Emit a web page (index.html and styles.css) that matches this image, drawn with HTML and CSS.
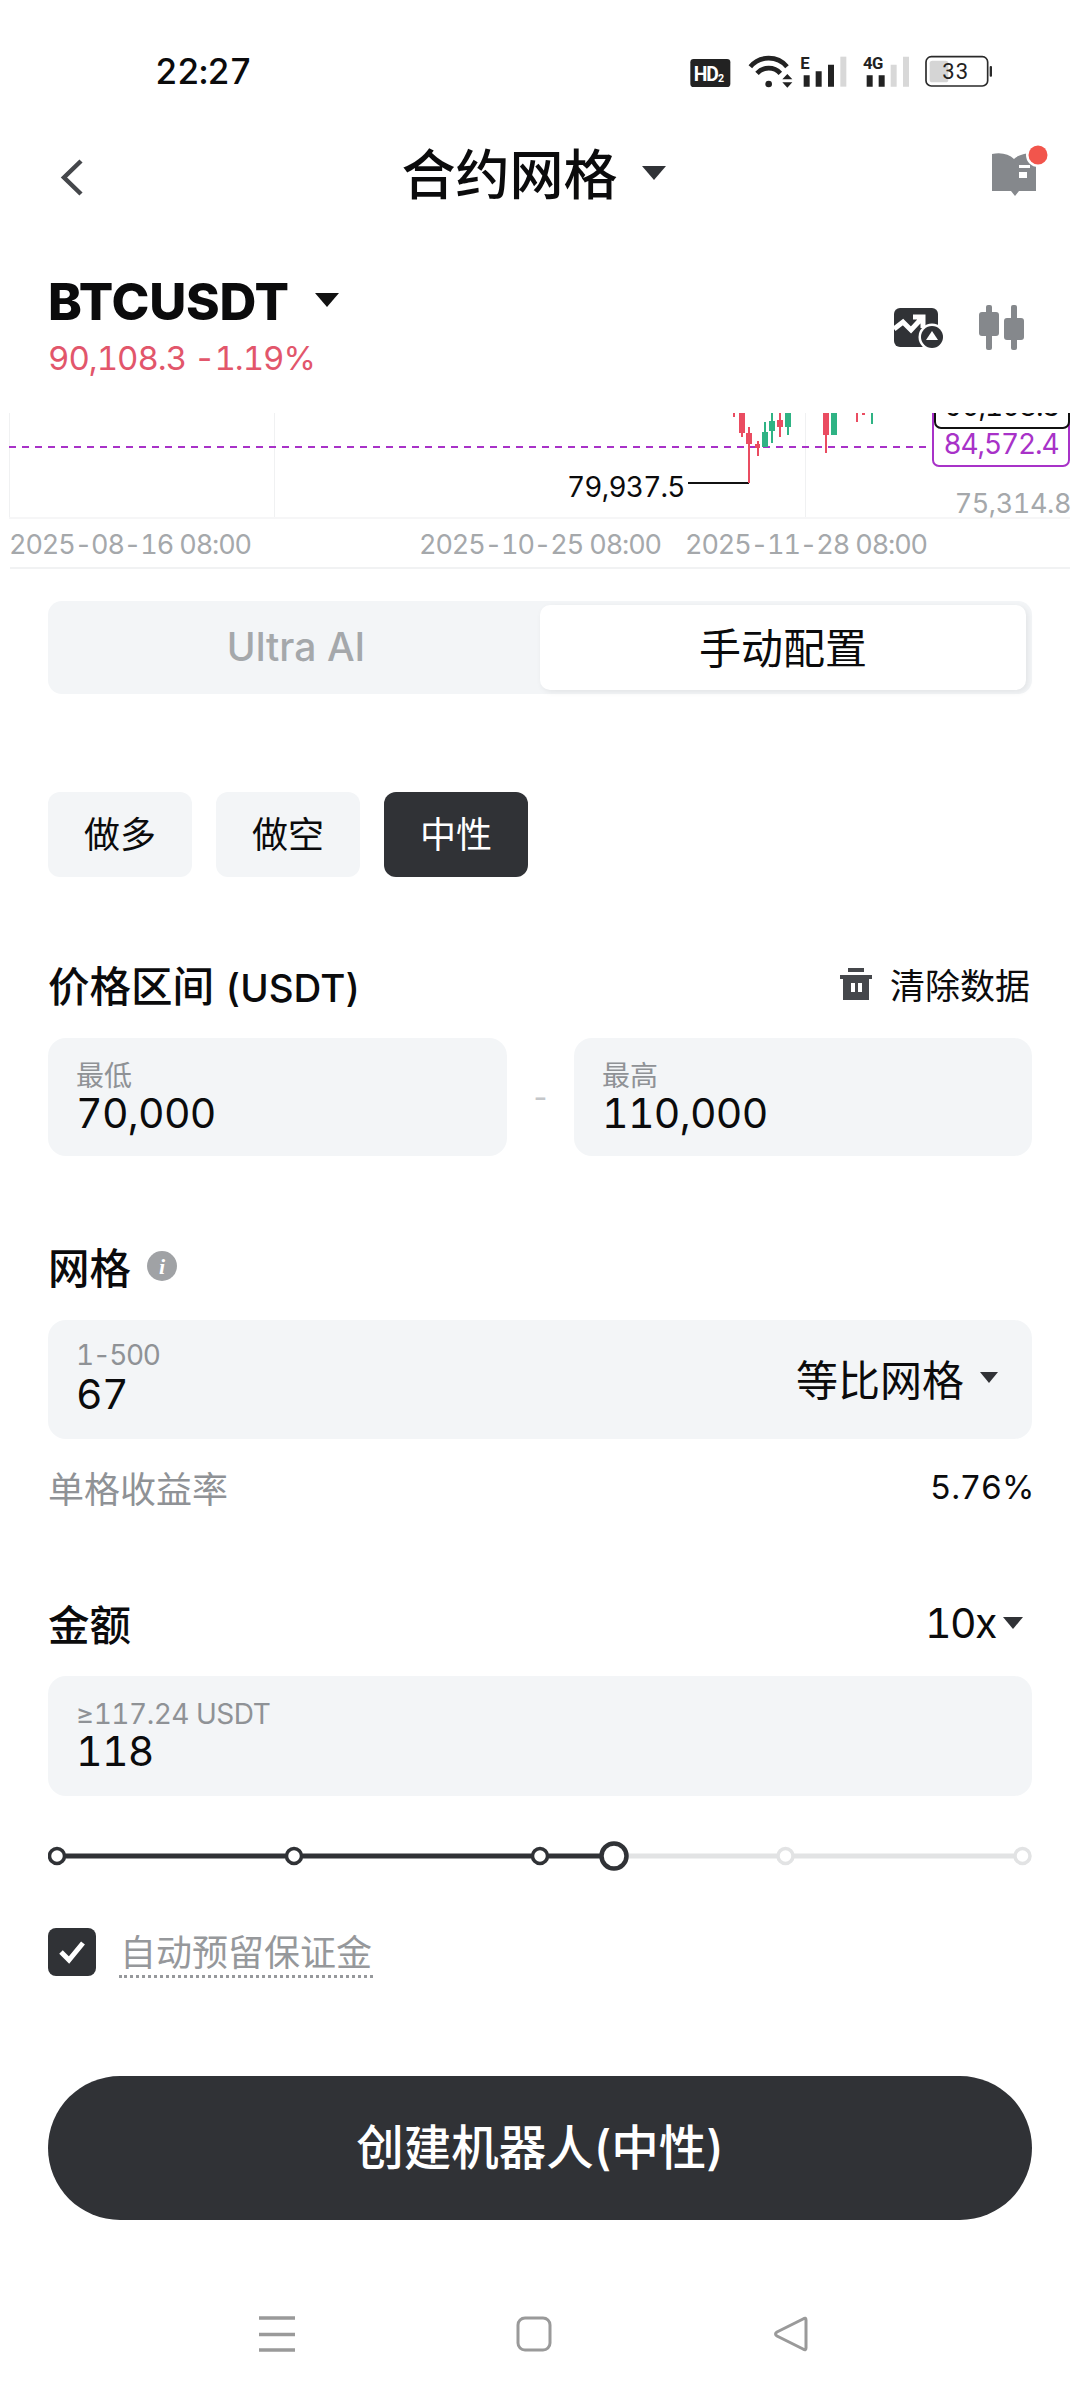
FILE: index.html
```html
<!DOCTYPE html>
<html lang="zh-CN">
<head>
<meta charset="utf-8">
<title>合约网格</title>
<link rel="stylesheet" href="styles.css">
</head>
<body>
<div class="screen">
  <header class="status">
    <span class="time">22:27</span>
    <svg class="status-icons" viewBox="80 60 930 120" width="310" height="40">
      <rect x="90" y="87" width="120" height="84" rx="10" fill="#222"/>
      <text x="100" y="152" class="si-hd">HD<tspan class="si-hd2" dy="4">2</tspan></text>
      <path d="M270 110A72 72 0 0 1 380 110M290 130A47 47 0 0 1 360 130" fill="none" stroke="#222" stroke-width="14"/>
      <circle cx="325" cy="162" r="10" fill="#222"/>
      <path d="M381 132l15 16h-30zM381 173l15-16h-30z" fill="#222"/>
      <text x="420" y="118" class="si-net">E</text>
      <path d="M430 136h18v34h-18zM466 124h18v46h-18zM503 104h18v66h-18z" fill="#222"/>
      <path d="M540 80h18v90h-18z" fill="#d8d8d8"/>
      <text x="608" y="118" class="si-net">4G</text>
      <path d="M619 136h18v34h-18zM655 136h18v34h-18z" fill="#222"/>
      <path d="M691 104h18v66h-18zM728 80h18v90h-18z" fill="#d8d8d8"/>
      <rect x="797" y="80" width="185" height="88" rx="16" fill="none" stroke="#2a2a2a" stroke-width="5"/>
      <rect x="808" y="92" width="56" height="65" rx="8" fill="#d5d5d5"/>
      <text x="846" y="148" class="si-batt">33</text>
      <rect x="988" y="108" width="7" height="32" rx="3" fill="#2a2a2a"/>
    </svg>
  </header>

  <nav class="nav">
    <svg class="back" viewBox="0 0 24 37" width="24" height="37"><path d="M21 2L4 18.500 21 35" fill="none" stroke="#45474b" stroke-width="4.500"/></svg>
    <div class="nav-title"><span class="nav-text">合约网格</span><i class="caret caret-title"></i></div>
    <svg class="book" viewBox="0 0 60 50" width="60" height="50">
      <path d="M3 5C12 3 20 5 25 10C29 6 36 4 47 4V42H30L26 47L22 42H3Z" fill="#85888c"/>
      <path d="M30 16H41V19H30zM30 23H38V29H30z" fill="#fff"/>
      <circle cx="49" cy="6" r="12" fill="#fff"/>
      <circle cx="49" cy="6" r="9.500" fill="#f2554c"/>
    </svg>
  </nav>

  <section class="symbol">
    <div>
      <div class="symbol-name"><span>BTCUSDT</span><i class="caret caret-symbol"></i></div>
      <div class="symbol-price">90,108.3 -1.19%</div>
    </div>
    <div class="symbol-tools">
      <svg class="tool-trend" viewBox="0 0 50 42" width="50" height="42">
        <rect x="1" y="1" width="44" height="39" rx="6" fill="#303236"/>
        <path d="M1 22L10 15L18 23L30 10M20 10H30V21" fill="none" stroke="#fff" stroke-width="5"/>
        <circle cx="39" cy="30" r="13.500" fill="#fff"/>
        <circle cx="39" cy="30" r="11" fill="#303236"/>
        <path d="M39 24L45 33H33Z" fill="#fff"/>
      </svg>
      <svg viewBox="0 0 46 46" width="46" height="46">
        <g class="tool-candle">
          <rect x="0" y="7" width="20" height="24" rx="3"/>
          <rect x="7" y="0" width="6" height="45" rx="2"/>
          <rect x="25" y="13" width="20" height="22" rx="3"/>
          <rect x="32" y="0" width="6" height="45" rx="2"/>
        </g>
      </svg>
    </div>
  </section>

  <section class="chart">
    <svg class="chart-plot" viewBox="0 413 1080 157" width="1080" height="157">
      <path d="M9.500 413V518M274.500 413V518M805.500 413V518" stroke="#f0f1f2" stroke-width="1"/>
      <path d="M9 518H1070" stroke="#f6f6f7" stroke-width="2"/>
      <path d="M10 568H1070" stroke="#f1f2f3" stroke-width="2"/>
      <path d="M9 447H932" stroke="#a832c8" stroke-width="2" stroke-dasharray="7 6"/>
      <path d="M688 483H749" stroke="#111" stroke-width="2"/>
      <g class="candle-red">
        <path d="M733 413h2v4h-2zM739 413h6v20h-6zM741 433h2v4h-2zM746 433h6v11h-6zM748 427h2v56h-2zM755 444h5v4h-5zM757 441h2v15h-2zM777 420h6v7h-6zM779 413h2v24h-2zM823 413h6v22h-6zM825 435h2v18h-2zM856 413h2v9h-2zM862 413h3v2h-3z"/>
      </g>
      <g class="candle-green">
        <path d="M762 432h6v15h-6zM764 422h2v10h-2zM769 421h6v10h-6zM771 413h2v30h-2zM785 413h6v14h-6zM787 427h2v8h-2zM831 413h6v22h-6zM871 413h2v11h-2z"/>
      </g>
    </svg>
    <div class="tag tag-last">90,108.3</div>
    <div class="tag tag-mark">84,572.4</div>
    <span class="chart-label label-low">79,937.5</span>
    <span class="chart-label label-axis">75,314.8</span>
    <span class="chart-label date date-a">2025-08-16 08:00</span>
    <span class="chart-label date date-b">2025-10-25 08:00</span>
    <span class="chart-label date date-c">2025-11-28 08:00</span>
  </section>

  <main class="form">
    <div class="tabs">
      <div class="tab">Ultra AI</div>
      <div class="tab tab-on">手动配置</div>
    </div>

    <div class="modes">
      <div class="mode">做多</div>
      <div class="mode">做空</div>
      <div class="mode mode-on">中性</div>
    </div>

    <div class="head head-price">
      <span class="head-title">价格区间 <span class="head-unit">(USDT)</span></span>
      <span class="clear">
        <svg viewBox="0 0 32 32" width="32" height="32"><path d="M8 0H24V4H8zM0 7H32V11H29V32H3V11H0z" fill="#45474b"/><path d="M11 15H15V24H11zM18 15H22V24H18z" fill="#fff"/></svg>
        清除数据
      </span>
    </div>
    <div class="range">
      <div class="field field-half"><span class="field-label">最低</span><span class="field-value">70,000</span></div>
      <span class="range-dash">-</span>
      <div class="field field-half"><span class="field-label">最高</span><span class="field-value">110,000</span></div>
    </div>

    <div class="head head-grid">
      <span class="head-title head-info">网格
        <svg viewBox="0 0 30 30" width="30" height="30"><circle cx="15" cy="15" r="15" fill="#a0a2a5"/><text x="15" y="23" class="info-i">i</text></svg>
      </span>
    </div>
    <div class="field field-split">
      <div class="field-stack"><span class="field-label field-label-range">1-500</span><span class="field-value">67</span></div>
      <div class="field-select"><span>等比网格</span><i class="caret caret-select"></i></div>
    </div>
    <div class="rate"><span class="rate-label">单格收益率</span><span class="rate-value">5.76%</span></div>

    <div class="head head-amount">
      <span class="head-title">金额</span>
      <span class="lever">10x<i class="caret caret-lever"></i></span>
    </div>
    <div class="field field-amount"><span class="field-label field-label-min">≥117.24 USDT</span><span class="field-value">118</span></div>

    <svg class="slider" viewBox="48 1841 984 30" width="984" height="30">
      <path d="M57 1856H614" stroke="#303236" stroke-width="5"/>
      <path d="M614 1856H1022" stroke="#e2e3e4" stroke-width="5"/>
      <g class="node-on"><circle cx="57" cy="1856" r="7.500"/><circle cx="294" cy="1856" r="7.500"/><circle cx="540" cy="1856" r="7.500"/></g>
      <circle class="node-big" cx="614" cy="1856" r="12.500"/>
      <g class="node-off"><circle cx="785.500" cy="1856" r="7.500"/><circle cx="1022.500" cy="1856" r="7.500"/></g>
    </svg>

    <div class="auto">
      <span class="check"><svg viewBox="0 0 30 26" width="30" height="26"><path d="M4 13L12 21L26 4" fill="none" stroke="#fff" stroke-width="5"/></svg></span>
      <span class="auto-label">自动预留保证金</span>
    </div>

    <button class="submit" type="button">创建机器人(中性)</button>
  </main>

  <footer class="sysnav">
    <svg viewBox="0 0 36 36" width="36" height="36"><path d="M0 2H36M0 18.500H36M0 34H36" stroke="#9a9a9a" stroke-width="3.500"/></svg>
    <svg viewBox="0 0 36 36" width="36" height="36"><rect x="2" y="2" width="32" height="32" rx="7" fill="none" stroke="#9a9a9a" stroke-width="3"/></svg>
    <svg viewBox="0 0 36 36" width="36" height="36"><path d="M33 4Q33 1 30 3L4 16Q1 18 4 20L30 33Q33 35 33 32Z" fill="none" stroke="#9a9a9a" stroke-width="3"/></svg>
  </footer>
</div>
</body>
</html>
```

FILE: styles.css
```css
* { box-sizing: border-box; }
html, body { margin: 0; background: #fff; }
body {
  font-family: Inter, "Noto Sans CJK SC", "Noto Sans", sans-serif;
  font-variant-numeric: tabular-nums;
  color: #0b0b0c;
}
.screen { width: 1080px; height: 2400px; overflow: hidden; }

.caret {
  display: inline-block;
  width: 0;
  height: 0;
  border-left: 12px solid transparent;
  border-right: 12px solid transparent;
  border-top: 14px solid #303236;
}

/* status bar */
.status {
  height: 140px;
  display: flex;
  align-items: center;
  justify-content: space-between;
  padding: 0 83px 0 155px;
}
.time { font-size: 35px; font-weight: 500; padding-top: 2px; letter-spacing: -0.8px; }
.si-hd { font: 700 58px "Roboto", sans-serif; fill: #fff; letter-spacing: -3px; }
.si-hd2 { font-size: 32px; }
.si-net { font: 700 50px "Roboto", sans-serif; fill: #222; letter-spacing: -2px; }
.si-batt { font: 400 66px "Roboto", sans-serif; fill: #222; letter-spacing: 3px; }

/* title bar */
.nav {
  height: 70px;
  display: flex;
  align-items: center;
  justify-content: space-between;
  padding: 0 31px 0 60px;
}
.back { margin-top: 4px; }
.nav-title {
  display: flex;
  align-items: center;
  gap: 24px;
  margin-right: 6px;
  font-size: 54px;
  font-weight: 500;
}
.nav-text { margin-top: -8px; }
.caret-title { margin-top: -4px; }
.book { margin-top: -2px; overflow: visible; }

/* symbol */
.symbol {
  height: 203px;
  padding: 70px 48px 0 48px;
  display: flex;
  justify-content: space-between;
  align-items: flex-start;
}
.symbol-name {
  display: flex;
  align-items: center;
  gap: 26px;
  height: 44px;
  font-size: 51px;
  font-weight: 800;
  line-height: 44px;
  letter-spacing: -0.2px;
}
.caret-symbol { border-top-color: #111; margin-top: -4px; }
.symbol-price {
  margin-top: 14px;
  font-size: 33px;
  line-height: 40px;
  color: #e2566b;
  letter-spacing: -1px;
}
.symbol-tools {
  display: flex;
  align-items: center;
  gap: 36px;
  margin: 25px 7px 0 0;
}
.tool-trend { overflow: visible; }
.tool-candle { fill: #85888c; }

/* chart */
.chart { position: relative; height: 157px; }
.chart-plot { display: block; }
.candle-red { fill: #ea4c61; }
.candle-green { fill: #2fb384; }
.tag {
  position: absolute;
  right: 10px;
  border-style: solid;
  border-width: 2px;
  border-radius: 0 0 7px 7px;
  text-align: center;
  font-size: 28px;
  letter-spacing: -1.1px;
  background: #fff;
}
.tag-last {
  top: -26px;
  width: 136px;
  height: 42px;
  line-height: 34px;
  border-color: #111;
  clip-path: inset(26px 0 -2px 0);
  z-index: 1;
}
.tag-mark {
  top: 0;
  width: 138px;
  height: 54px;
  line-height: 58px;
  border-color: #a832c8;
  color: #a832c8;
}
.chart-label { position: absolute; font-size: 27px; line-height: 34px; white-space: nowrap; }
.label-low { left: 567px; top: 57px; font-size: 28px; letter-spacing: -0.8px; }
.label-axis { right: 9px; top: 74px; color: #a5a8ab; letter-spacing: -0.4px; }
.date { top: 115px; color: #a5a8ab; letter-spacing: -1.1px; }
.date-a { left: 9px; }
.date-b { left: 419px; }
.date-c { left: 685px; }

/* form */
.form { padding: 0 48px; }

.tabs {
  margin-top: 31px;
  height: 93px;
  padding: 4px;
  display: grid;
  grid-template-columns: 488px 486px;
  background: #f3f5f7;
  border-radius: 14px;
}
.tab {
  display: flex;
  align-items: center;
  justify-content: center;
  padding-bottom: 2px;
  font-size: 39px;
  color: #a5a8ab;
  font-weight: 500;
}
.tab-on {
  background: #fff;
  border-radius: 10px;
  box-shadow: 2px 2px 6px rgba(0, 0, 0, 0.07);
  padding-bottom: 5px;
  font-size: 42px;
  color: #0b0b0c;
  font-weight: 400;
}

.modes { margin-top: 98px; display: flex; gap: 24px; }
.mode {
  width: 144px;
  height: 85px;
  padding-bottom: 5px;
  display: flex;
  align-items: center;
  justify-content: center;
  background: #f3f5f7;
  border-radius: 12px;
  font-size: 36px;
}
.mode-on { background: #303236; color: #fff; }

.head {
  height: 50px;
  padding-bottom: 7px;
  display: flex;
  align-items: center;
  justify-content: space-between;
}
.head-price { margin-top: 85px; }
.head-grid { margin-top: 88px; }
.head-amount { margin-top: 94px; }
.head-title { font-size: 41.500px; font-weight: 500; }
.head-unit { font-size: 38.500px; font-weight: 500; }
.head-info { display: flex; align-items: center; gap: 16px; }
.info-i { font: italic 700 22px "Liberation Serif", serif; fill: #fff; text-anchor: middle; }
.clear {
  display: flex;
  align-items: center;
  gap: 18px;
  padding-right: 2px;
  font-size: 35px;
}

.field {
  display: flex;
  flex-direction: column;
  height: 119px;
  padding: 23px 28px 0;
  background: #f3f5f7;
  border-radius: 18px;
}
.field-label { font-size: 28px; line-height: 30px; color: #8f9296; }
.field-label-range { letter-spacing: -1.5px; }
.field-label-min { letter-spacing: -0.5px; }
.field-value { margin-top: 2px; font-size: 41px; line-height: 40px; letter-spacing: -0.7px; }

.range {
  margin-top: 26px;
  display: grid;
  grid-template-columns: 459px 1fr 458px;
  align-items: center;
}
.field-half { height: 118px; }
.range-dash { text-align: center; color: #c5c7ca; font-size: 30px; }

.field-split {
  margin-top: 26px;
  flex-direction: row;
  justify-content: space-between;
  align-items: flex-start;
  padding: 20px 34px 0 28px;
}
.field-stack { display: flex; flex-direction: column; }
.field-stack .field-label { margin-bottom: 2px; }
.field-select {
  display: flex;
  align-items: center;
  gap: 16px;
  height: 80px;
  padding-bottom: 6px;
  font-size: 42px;
}
.caret-select { border-width: 11px 9px 0; border-top-color: #303236; }

.rate {
  margin-top: 28px;
  height: 40px;
  display: flex;
  align-items: center;
  justify-content: space-between;
}
.rate-label { font-size: 36px; color: #8f9296; }
.rate-value { font-size: 33px; letter-spacing: -0.3px; margin-right: -2px; }

.lever { display: flex; align-items: center; gap: 7px; font-size: 41px; padding-right: 9px; letter-spacing: -1.5px; }
.caret-lever { border-width: 12px 10px 0; border-top-color: #303236; }

.field-amount { margin-top: 25px; height: 120px; }

.slider { display: block; margin-top: 45px; }
.node-on circle { fill: #fff; stroke: #303236; stroke-width: 3.5; }
.node-big { fill: #fff; stroke: #303236; stroke-width: 4.5; }
.node-off circle { fill: #fff; stroke: #e2e3e4; stroke-width: 3.5; }

.auto { margin-top: 57px; height: 50px; display: flex; align-items: flex-start; gap: 23px; }
.check {
  width: 48px;
  height: 48px;
  display: flex;
  align-items: center;
  justify-content: center;
  background: #303236;
  border-radius: 8px;
}
.auto-label {
  height: 50px;
  line-height: 50px;
  font-size: 36px;
  color: #96989b;
  border-bottom: 3px dotted #96989b;
  padding: 0 1px;
}

.submit {
  display: block;
  width: 100%;
  height: 144px;
  margin-top: 98px;
  padding: 0 0 8px;
  border: 0;
  border-radius: 72px;
  background: #303236;
  color: #fff;
  font: 500 47.500px Inter, "Noto Sans CJK SC", sans-serif;
}

.sysnav {
  margin-top: 80px;
  height: 68px;
  display: grid;
  grid-template-columns: 36px 36px 36px;
  justify-content: space-between;
  align-items: center;
  padding: 0 271px 0 259px;
}
```
